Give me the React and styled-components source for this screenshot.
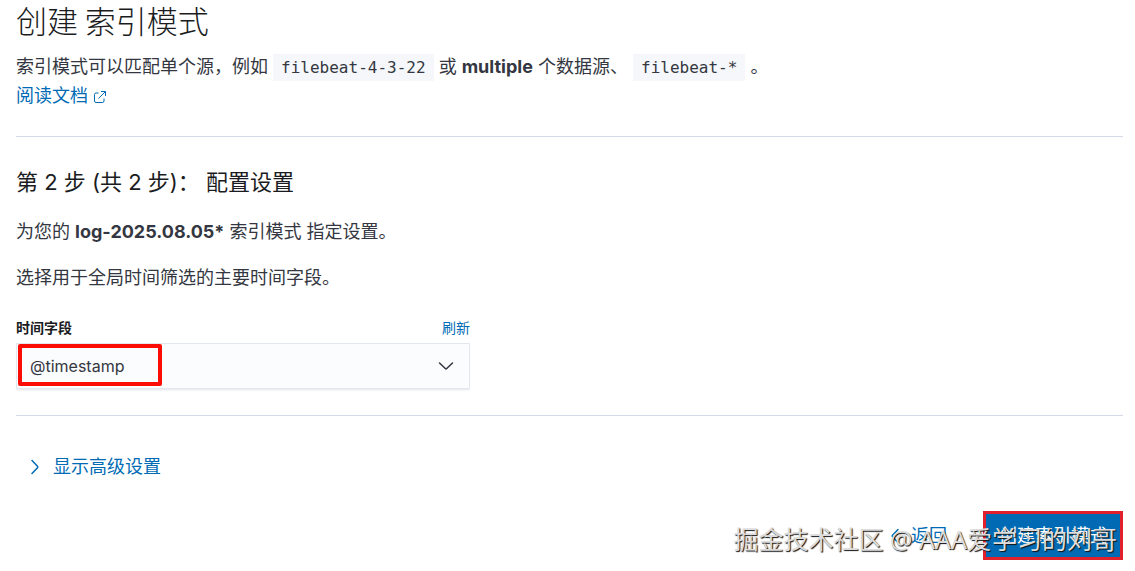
import React from 'react'
import styled, { createGlobalStyle } from 'styled-components'

const App = () => {

	return (
		<>
			<GlobalStyle />
			<Page>
				<Title>创建 索引模式</Title>
				<Intro>
					索引模式可以匹配单个源，例如 <Code>filebeat-4-3-22</Code> 或 <strong>multiple</strong> 个数据源、 <Code>filebeat-*</Code> 。
					<br />
					<DocLink href="#docs">
						阅读文档
						<ExternalIcon />
					</DocLink>
				</Intro>
				<Divider />
				<StepTitle>第 2 步 (共 2 步)： 配置设置</StepTitle>
				<Text>为您的 <strong>log-2025.08.05*</strong> 索引模式 指定设置。</Text>
				<Text>选择用于全局时间筛选的主要时间字段。</Text>
				<Field>
					<FieldHeader>
						<FieldLabel htmlFor="time-field">时间字段</FieldLabel>
						<RefreshButton type="button">刷新</RefreshButton>
					</FieldHeader>
					<SelectWrapper>
						<Select id="time-field" name="time-field" defaultValue="@timestamp">
							<option value="@timestamp">@timestamp</option>
						</Select>
						<SelectArrow>
							<Chevron />
						</SelectArrow>
						<FieldHighlight />
					</SelectWrapper>
				</Field>
				<Divider />
				<AdvancedButton type="button">
					<Chevron $direction="right" />
					显示高级设置
				</AdvancedButton>
				<Actions>
					<BackButton type="button">
						<Chevron $direction="left" />
						返回
					</BackButton>
					<CreateButton type="button">创建索引模式</CreateButton>
					<Watermark>掘金技术社区 @ AAA爱学习的刘哥</Watermark>
				</Actions>
			</Page>
		</>
	)
}

const ExternalIcon = () => (
	<ExternalSvg viewBox="0 0 12 12" aria-hidden="true">
		<path d="M4.5 2H2A1.5 1.5 0 0 0 .5 3.5V10A1.5 1.5 0 0 0 2 11.5h6.5A1.5 1.5 0 0 0 10 10V7.5" />
		<path d="M7 .5h4.5V5M11.5 .5l-7 7" />
	</ExternalSvg>
)

const Chevron = ({ $direction }) => (
	<ChevronSvg $direction={$direction} viewBox="0 0 16 16" aria-hidden="true">
		<path d="M1.5 5l5.8 5.5a1 1 0 0 0 1.4 0L14.5 5" />
	</ChevronSvg>
)

const rotations = { left: '90deg', right: '-90deg' }

const GlobalStyle = createGlobalStyle`
    * {
        box-sizing: border-box;
    }
    body {
        margin: 0;
        background-color: #fff;
        color: #343741;
        font-family: Inter, "Noto Sans CJK SC", sans-serif;
        font-size: 18px;
        line-height: 28px;
    }
    button,
    select {
        margin: 0;
        padding: 0;
        border: 0;
        background: none;
        color: inherit;
        font: inherit;
    }
    button {
        cursor: pointer;
    }
`
const Page = styled.main`
    display: flex;
    flex-direction: column;
    padding: 0 12px 11px 16px;
`
const Title = styled.h1`
    margin: 0 0 13px;
    color: #1a1c21;
    font-family: "Noto Sans CJK SC", sans-serif;
    font-size: 31px;
    font-weight: 300;
    line-height: 40px;
`
const Intro = styled.p`
    margin: 0;

    strong {
        font-weight: 700;
    }
`
const Code = styled.code`
    padding: 4px 8px;
    background-color: #f5f7fa;
    font-family: "DejaVu Sans Mono", monospace;
    font-size: 16px;
`
const DocLink = styled.a`
    color: #006bb4;
    text-decoration: none;
`
const ExternalSvg = styled.svg`
    width: 12px;
    height: 12px;
    margin-left: 6px;
    vertical-align: -1px;
    fill: none;
    stroke: currentColor;
`
const ChevronSvg = styled.svg`
    width: 16px;
    height: 16px;
    flex: none;
    fill: none;
    stroke: currentColor;
    stroke-width: 1.5;
    stroke-linecap: round;
    transform: rotate(${({ $direction }) => rotations[$direction] || '0deg'});
`
const Divider = styled.hr`
    width: 100%;
    height: 1px;
    margin: 26px 0 27px;
    border: 0;
    background-color: #d3dae6;
`
const StepTitle = styled.h2`
    margin: 2px 0 20px;
    color: #1a1c21;
    font-size: 22px;
    font-weight: 400;
    line-height: 32px;
`
const Text = styled.p`
    margin: 0 0 18px;

    strong {
        font-weight: 700;
    }
`
const Field = styled.div`
    width: 100%;
    max-width: 454px;
    margin-top: 8px;
`
const FieldHeader = styled.div`
    display: flex;
    justify-content: space-between;
    margin-bottom: 5px;
    font-size: 14px;
    line-height: 20px;
`
const FieldLabel = styled.label`
    color: #1a1c21;
    font-weight: 700;
`
const RefreshButton = styled.button`
    color: #006bb4;
`
const SelectWrapper = styled.div`
    position: relative;
`
const Select = styled.select`
    display: block;
    width: 100%;
    height: 46px;
    padding: 0 44px 0 13px;
    border: 1px solid #e3e7ee;
    background-color: #fbfcfd;
    box-shadow: 0 2px 2px -1px rgba(152, 162, 179, 0.3);
    font-size: 16px;
    appearance: none;
`
const SelectArrow = styled.span`
    position: absolute;
    top: 0;
    right: 16px;
    display: flex;
    align-items: center;
    height: 100%;
    pointer-events: none;
`
const FieldHighlight = styled.span`
    position: absolute;
    top: 1px;
    left: 2px;
    width: 144px;
    height: 42px;
    border: 4px solid #fb0d06;
    border-radius: 2px;
    pointer-events: none;
`
const AdvancedButton = styled.button`
    display: flex;
    align-items: center;
    align-self: flex-start;
    gap: 10px;
    margin: 10px 0 30px 11px;
    color: #006bb4;
`
const Actions = styled.div`
    position: relative;
    display: flex;
    justify-content: flex-end;
    align-items: center;
    gap: 36px;
`
const BackButton = styled.button`
    display: flex;
    align-items: center;
    gap: 8px;
    color: #006bb4;
`
const CreateButton = styled.button`
    height: 49px;
    padding: 0 13px;
    border: 3px solid #e0202b;
    background-color: #006bb4;
    color: #fff;
`
const Watermark = styled.span`
    position: absolute;
    right: 6px;
    bottom: 3px;
    color: #dcdcdc;
    font-family: "Noto Sans", "Noto Sans CJK SC", sans-serif;
    font-size: 25px;
    line-height: 36px;
    text-shadow: 1px 1px 1px #111;
    white-space: nowrap;
    pointer-events: none;
`

export default App
